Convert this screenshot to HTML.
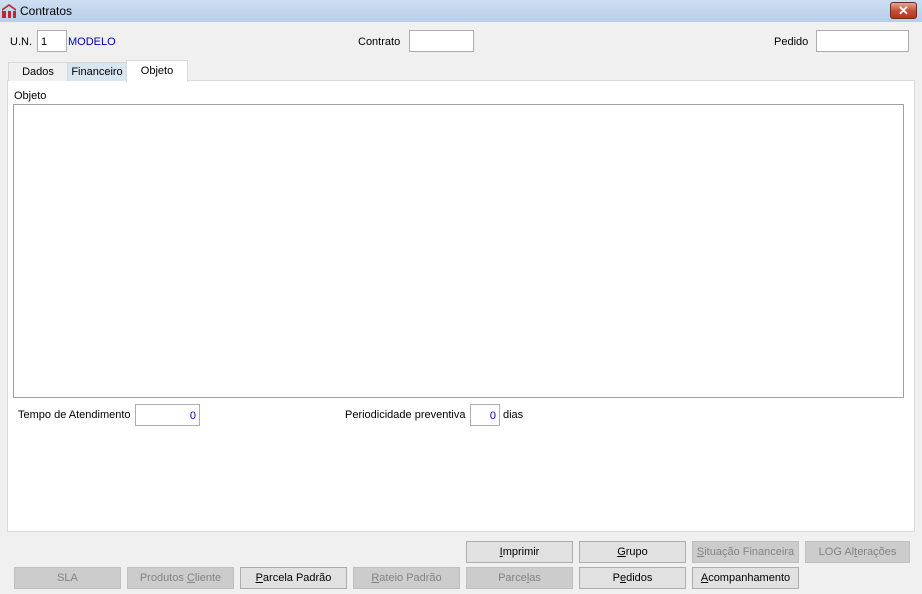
<!DOCTYPE html>
<html><head><meta charset="utf-8"><style>
*{box-sizing:border-box;margin:0;padding:0}
body{width:922px;height:594px;background:#f0f0f0;font-family:"Liberation Sans",sans-serif;font-size:11px;color:#000;position:relative;overflow:hidden}
.a{position:absolute}
.title{left:0;top:0;width:922px;height:22px;background:linear-gradient(#cfdff2,#b7cde9);}
.inp{position:absolute;background:#fff;border:1px solid #abadb3;height:22px}
.btn{position:absolute;width:107px;height:22px;border:1px solid #adadad;background:#e1e1e1;text-align:center;line-height:20px;font-size:11px}
.dis{background:#cccccc;border-color:#bfbfbf;color:#838383}
u{text-decoration:underline}
</style></head><body>
<div class="a title"></div>
<svg class="a" style="left:1px;top:3px" width="16" height="16" viewBox="0 0 16 16"><path d="M1 6 L8 1 L15 6 L15 8 L8 3 L1 8Z" fill="#c0272d"/><rect x="1" y="8" width="4" height="7" fill="#c0272d"/><rect x="7" y="8" width="3" height="7" fill="#c0272d"/><rect x="12" y="8" width="3" height="7" fill="#c0272d"/></svg>
<div class="a" style="left:20px;top:4px;font-size:12px">Contratos</div>
<div class="a" style="left:890px;top:2px;width:27px;height:17px;border:1px solid #6b2b25;border-radius:3px;background:linear-gradient(#e8a493,#c7513a 50%,#b8321d);color:#fff;font-weight:bold;text-align:center;line-height:15px;font-size:13px">✕</div>

<div class="a" style="left:10px;top:36px">U.N.</div>
<div class="inp" style="left:37px;top:30px;width:30px;padding:5px 3px">1</div>
<div class="a" style="left:68px;top:36px;color:#0000c0">MODELO</div>
<div class="a" style="left:358px;top:36px">Contrato</div>
<div class="inp" style="left:409px;top:30px;width:65px"></div>
<div class="a" style="left:774px;top:36px">Pedido</div>
<div class="inp" style="left:816px;top:30px;width:93px"></div>

<div class="a" style="left:7px;top:80px;width:908px;height:452px;background:#fff;border:1px solid #d9d9d9"></div>
<div class="a" style="left:8px;top:62px;width:60px;height:19px;border:1px solid #d9d9d9;border-bottom:none;background:#f0f0f0;text-align:center;line-height:18px">Dados</div>
<div class="a" style="left:67px;top:62px;width:60px;height:19px;border:1px solid #d9d9d9;border-bottom:none;background:#d8e6f2;text-align:center;line-height:18px">Financeiro</div>
<div class="a" style="left:126px;top:60px;width:62px;height:22px;border:1px solid #d9d9d9;border-bottom:none;background:#fff;text-align:center;line-height:20px">Objeto</div>
<div class="a" style="left:14px;top:90px">Objeto</div>
<div class="a" style="left:13px;top:104px;width:891px;height:294px;border:1px solid #a0a0a0;background:#fff"></div>

<div class="a" style="left:18px;top:409px">Tempo de Atendimento</div>
<div class="inp" style="left:135px;top:404px;width:65px;text-align:right;padding:5px 3px;color:#0000c0">0</div>
<div class="a" style="left:345px;top:409px">Periodicidade preventiva</div>
<div class="inp" style="left:470px;top:404px;width:30px;text-align:right;padding:5px 3px;color:#0000c0">0</div>
<div class="a" style="left:503px;top:409px">dias</div>

<div class="btn" style="left:466px;top:541px"><u>I</u>mprimir</div>
<div class="btn" style="left:579px;top:541px"><u>G</u>rupo</div>
<div class="btn dis" style="left:692px;top:541px"><u>S</u>ituação Financeira</div>
<div class="btn dis" style="left:805px;top:541px;width:105px">LOG Al<u>t</u>erações</div>
<div class="btn dis" style="left:14px;top:567px">SLA</div>
<div class="btn dis" style="left:127px;top:567px">Produtos <u>C</u>liente</div>
<div class="btn" style="left:240px;top:567px"><u>P</u>arcela Padrão</div>
<div class="btn dis" style="left:353px;top:567px"><u>R</u>ateio Padrão</div>
<div class="btn dis" style="left:466px;top:567px">Parce<u>l</u>as</div>
<div class="btn" style="left:579px;top:567px">P<u>e</u>didos</div>
<div class="btn" style="left:692px;top:567px"><u>A</u>companhamento</div>
</body></html>
